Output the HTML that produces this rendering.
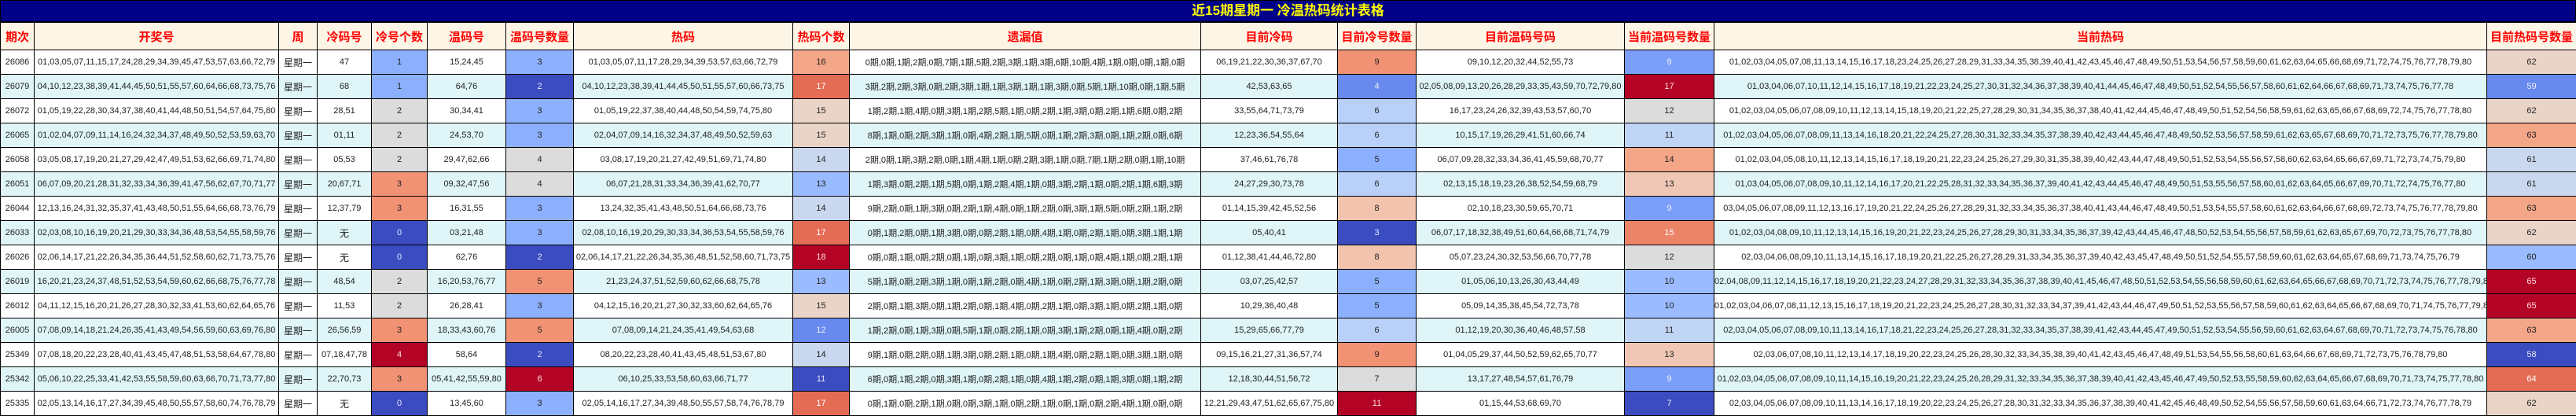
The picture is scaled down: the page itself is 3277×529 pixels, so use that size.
<!DOCTYPE html>
<html><head><meta charset="utf-8">
<style>
*{margin:0;padding:0;box-sizing:border-box}
body{width:3277px;height:529px;overflow:hidden;background:#fff;font-family:"Liberation Sans","Noto Sans CJK SC",sans-serif}
.title{height:28px;background:#000088;border:1px solid #000;color:#ffff00;font-weight:bold;font-size:17px;line-height:26px;text-align:center}
table{border-collapse:collapse;table-layout:fixed;width:3277px}
td,th{border:1px solid #000;text-align:center;white-space:nowrap;overflow:hidden;font-size:11px;color:#222}
th{height:35px;background:#fdf5e6;color:#ff0000;font-size:15px;font-weight:bold}
td{height:31px}
tr.e td{background:#dff5f8}
td.w{font-size:12px}
.db{background:#3b4cc0!important;color:#e8e8ff!important}
.mb{background:#6889ee!important;color:#eef!important}
.mb2{background:#7b9ff9!important;color:#eef!important}
.lb{background:#8db0fe!important}
.lb2{background:#9abbff!important}
.vb{background:#b9d0f9!important}
.vb2{background:#c0d4f5!important}
.pb{background:#cad8ef!important}
.g{background:#dcdcdc!important}
.pk{background:#ead4c8!important}
.pk2{background:#efc7b4!important}
.s1{background:#f2c4ae!important}
.s2{background:#f4a688!important}
.s3{background:#f29274!important}
.s4{background:#ec8468!important;color:#fff!important}
.r1{background:#e46c54!important;color:#fff!important}
.dr{background:#b40426!important;color:#fdd!important}
</style></head><body>
<div class="title">近15期星期一 冷温热码统计表格</div>
<table>
<colgroup><col style="width:43px"><col style="width:311px"><col style="width:49px"><col style="width:69px"><col style="width:71px"><col style="width:100px"><col style="width:86px"><col style="width:279px"><col style="width:72px"><col style="width:447px"><col style="width:174px"><col style="width:100px"><col style="width:265px"><col style="width:114px"><col style="width:983px"><col style="width:114px"></colgroup>
<tr><th>期次</th><th>开奖号</th><th>周</th><th>冷码号</th><th>冷号个数</th><th>温码号</th><th>温码号数量</th><th>热码</th><th>热码个数</th><th>遗漏值</th><th>目前冷码</th><th>目前冷号数量</th><th>目前温码号码</th><th>当前温码号数量</th><th>当前热码</th><th>目前热码号数量</th></tr>

<tr><td>26086</td><td>01,03,05,07,11,15,17,24,28,29,34,39,45,47,53,57,63,66,72,79</td><td class="w">星期一</td><td>47</td><td class="lb">1</td><td>15,24,45</td><td class="lb">3</td><td>01,03,05,07,11,17,28,29,34,39,53,57,63,66,72,79</td><td class="s2">16</td><td>0期,0期,1期,2期,0期,7期,1期,5期,2期,3期,1期,3期,6期,10期,4期,1期,0期,0期,1期,0期</td><td>06,19,21,22,30,36,37,67,70</td><td class="s3">9</td><td>09,10,12,20,32,44,52,55,73</td><td class="mb2">9</td><td>01,02,03,04,05,07,08,11,13,14,15,16,17,18,23,24,25,26,27,28,29,31,33,34,35,38,39,40,41,42,43,45,46,47,48,49,50,51,53,54,56,57,58,59,60,61,62,63,64,65,66,68,69,71,72,74,75,76,77,78,79,80</td><td class="pk">62</td></tr>

<tr class="e"><td>26079</td><td>04,10,12,23,38,39,41,44,45,50,51,55,57,60,64,66,68,73,75,76</td><td class="w">星期一</td><td>68</td><td class="lb">1</td><td>64,76</td><td class="db">2</td><td>04,10,12,23,38,39,41,44,45,50,51,55,57,60,66,73,75</td><td class="r1">17</td><td>3期,2期,2期,3期,0期,2期,3期,1期,1期,3期,1期,1期,3期,0期,5期,1期,10期,0期,1期,5期</td><td>42,53,63,65</td><td class="mb">4</td><td>02,05,08,09,13,20,26,28,29,33,35,43,59,70,72,79,80</td><td class="dr">17</td><td>01,03,04,06,07,10,11,12,14,15,16,17,18,19,21,22,23,24,25,27,30,31,32,34,36,37,38,39,40,41,44,45,46,47,48,49,50,51,52,54,55,56,57,58,60,61,62,64,66,67,68,69,71,73,74,75,76,77,78</td><td class="mb">59</td></tr>

<tr><td>26072</td><td>01,05,19,22,28,30,34,37,38,40,41,44,48,50,51,54,57,64,75,80</td><td class="w">星期一</td><td>28,51</td><td class="g">2</td><td>30,34,41</td><td class="lb">3</td><td>01,05,19,22,37,38,40,44,48,50,54,59,74,75,80</td><td class="pk">15</td><td>1期,2期,1期,4期,0期,3期,1期,2期,5期,1期,0期,2期,1期,3期,0期,2期,1期,6期,0期,2期</td><td>33,55,64,71,73,79</td><td class="vb">6</td><td>16,17,23,24,26,32,39,43,53,57,60,70</td><td class="g">12</td><td>01,02,03,04,05,06,07,08,09,10,11,12,13,14,15,18,19,20,21,22,25,27,28,29,30,31,34,35,36,37,38,40,41,42,44,45,46,47,48,49,50,51,52,54,56,58,59,61,62,63,65,66,67,68,69,72,74,75,76,77,78,80</td><td class="pk">62</td></tr>

<tr class="e"><td>26065</td><td>01,02,04,07,09,11,14,16,24,32,34,37,48,49,50,52,53,59,63,70</td><td class="w">星期一</td><td>01,11</td><td class="g">2</td><td>24,53,70</td><td class="lb">3</td><td>02,04,07,09,14,16,32,34,37,48,49,50,52,59,63</td><td class="pk">15</td><td>8期,1期,0期,2期,3期,1期,0期,4期,2期,1期,5期,0期,1期,2期,3期,0期,1期,2期,0期,6期</td><td>12,23,36,54,55,64</td><td class="vb">6</td><td>10,15,17,19,26,29,41,51,60,66,74</td><td class="vb2">11</td><td>01,02,03,04,05,06,07,08,09,11,13,14,16,18,20,21,22,24,25,27,28,30,31,32,33,34,35,37,38,39,40,42,43,44,45,46,47,48,49,50,52,53,56,57,58,59,61,62,63,65,67,68,69,70,71,72,73,75,76,77,78,79,80</td><td class="s2">63</td></tr>

<tr><td>26058</td><td>03,05,08,17,19,20,21,27,29,42,47,49,51,53,62,66,69,71,74,80</td><td class="w">星期一</td><td>05,53</td><td class="g">2</td><td>29,47,62,66</td><td class="g">4</td><td>03,08,17,19,20,21,27,42,49,51,69,71,74,80</td><td class="pb">14</td><td>2期,0期,1期,3期,2期,0期,1期,4期,1期,0期,2期,3期,1期,0期,7期,1期,2期,0期,1期,10期</td><td>37,46,61,76,78</td><td class="lb">5</td><td>06,07,09,28,32,33,34,36,41,45,59,68,70,77</td><td class="s2">14</td><td>01,02,03,04,05,08,10,11,12,13,14,15,16,17,18,19,20,21,22,23,24,25,26,27,29,30,31,35,38,39,40,42,43,44,47,48,49,50,51,52,53,54,55,56,57,58,60,62,63,64,65,66,67,69,71,72,73,74,75,79,80</td><td class="pb">61</td></tr>

<tr class="e"><td>26051</td><td>06,07,09,20,21,28,31,32,33,34,36,39,41,47,56,62,67,70,71,77</td><td class="w">星期一</td><td>20,67,71</td><td class="s3">3</td><td>09,32,47,56</td><td class="g">4</td><td>06,07,21,28,31,33,34,36,39,41,62,70,77</td><td class="lb2">13</td><td>1期,3期,0期,2期,1期,5期,0期,1期,2期,4期,1期,0期,3期,2期,1期,0期,2期,1期,6期,3期</td><td>24,27,29,30,73,78</td><td class="vb">6</td><td>02,13,15,18,19,23,26,38,52,54,59,68,79</td><td class="pk2">13</td><td>01,03,04,05,06,07,08,09,10,11,12,14,16,17,20,21,22,25,28,31,32,33,34,35,36,37,39,40,41,42,43,44,45,46,47,48,49,50,51,53,55,56,57,58,60,61,62,63,64,65,66,67,69,70,71,72,74,75,76,77,80</td><td class="pb">61</td></tr>

<tr><td>26044</td><td>12,13,16,24,31,32,35,37,41,43,48,50,51,55,64,66,68,73,76,79</td><td class="w">星期一</td><td>12,37,79</td><td class="s3">3</td><td>16,31,55</td><td class="lb">3</td><td>13,24,32,35,41,43,48,50,51,64,66,68,73,76</td><td class="pb">14</td><td>9期,2期,0期,1期,3期,0期,2期,1期,4期,0期,1期,2期,0期,3期,1期,5期,0期,2期,1期,2期</td><td>01,14,15,39,42,45,52,56</td><td class="s1">8</td><td>02,10,18,23,30,59,65,70,71</td><td class="mb2">9</td><td>03,04,05,06,07,08,09,11,12,13,16,17,19,20,21,22,24,25,26,27,28,29,31,32,33,34,35,36,37,38,40,41,43,44,46,47,48,49,50,51,53,54,55,57,58,60,61,62,63,64,66,67,68,69,72,73,74,75,76,77,78,79,80</td><td class="s2">63</td></tr>

<tr class="e"><td>26033</td><td>02,03,08,10,16,19,20,21,29,30,33,34,36,48,53,54,55,58,59,76</td><td class="w">星期一</td><td class="w">无</td><td class="db">0</td><td>03,21,48</td><td class="lb">3</td><td>02,08,10,16,19,20,29,30,33,34,36,53,54,55,58,59,76</td><td class="r1">17</td><td>0期,1期,2期,0期,1期,3期,0期,0期,2期,1期,0期,4期,1期,0期,2期,1期,0期,3期,1期,1期</td><td>05,40,41</td><td class="db">3</td><td>06,07,17,18,32,38,49,51,60,64,66,68,71,74,79</td><td class="s4">15</td><td>01,02,03,04,08,09,10,11,12,13,14,15,16,19,20,21,22,23,24,25,26,27,28,29,30,31,33,34,35,36,37,39,42,43,44,45,46,47,48,50,52,53,54,55,56,57,58,59,61,62,63,65,67,69,70,72,73,75,76,77,78,80</td><td class="pk">62</td></tr>

<tr><td>26026</td><td>02,06,14,17,21,22,26,34,35,36,44,51,52,58,60,62,71,73,75,76</td><td class="w">星期一</td><td class="w">无</td><td class="db">0</td><td>62,76</td><td class="db">2</td><td>02,06,14,17,21,22,26,34,35,36,48,51,52,58,60,71,73,75</td><td class="dr">18</td><td>0期,0期,1期,0期,2期,0期,1期,0期,3期,1期,0期,2期,0期,1期,0期,4期,1期,0期,2期,1期</td><td>01,12,38,41,44,46,72,80</td><td class="s1">8</td><td>05,07,23,24,30,32,53,56,66,70,77,78</td><td class="g">12</td><td>02,03,04,06,08,09,10,11,13,14,15,16,17,18,19,20,21,22,25,26,27,28,29,31,33,34,35,36,37,39,40,42,43,45,47,48,49,50,51,52,54,55,57,58,59,60,61,62,63,64,65,67,68,69,71,73,74,75,76,79</td><td class="lb2">60</td></tr>

<tr class="e"><td>26019</td><td>16,20,21,23,24,37,48,51,52,53,54,59,60,62,66,68,75,76,77,78</td><td class="w">星期一</td><td>48,54</td><td class="g">2</td><td>16,20,53,76,77</td><td class="s3">5</td><td>21,23,24,37,51,52,59,60,62,66,68,75,78</td><td class="lb2">13</td><td>5期,1期,0期,2期,3期,1期,0期,1期,2期,0期,4期,1期,0期,2期,1期,3期,0期,1期,2期,0期</td><td>03,07,25,42,57</td><td class="lb">5</td><td>01,05,06,10,13,26,30,43,44,49</td><td class="lb2">10</td><td>02,04,08,09,11,12,14,15,16,17,18,19,20,21,22,23,24,27,28,29,31,32,33,34,35,36,37,38,39,40,41,45,46,47,48,50,51,52,53,54,55,56,58,59,60,61,62,63,64,65,66,67,68,69,70,71,72,73,74,75,76,77,78,79,80</td><td class="dr">65</td></tr>

<tr><td>26012</td><td>04,11,12,15,16,20,21,26,27,28,30,32,33,41,53,60,62,64,65,76</td><td class="w">星期一</td><td>11,53</td><td class="g">2</td><td>26,28,41</td><td class="lb">3</td><td>04,12,15,16,20,21,27,30,32,33,60,62,64,65,76</td><td class="pk">15</td><td>2期,0期,1期,3期,0期,1期,2期,0期,1期,4期,0期,2期,1期,0期,3期,1期,0期,2期,1期,0期</td><td>10,29,36,40,48</td><td class="lb">5</td><td>05,09,14,35,38,45,54,72,73,78</td><td class="lb2">10</td><td>01,02,03,04,06,07,08,11,12,13,15,16,17,18,19,20,21,22,23,24,25,26,27,28,30,31,32,33,34,37,39,41,42,43,44,46,47,49,50,51,52,53,55,56,57,58,59,60,61,62,63,64,65,66,67,68,69,70,71,74,75,76,77,79,80</td><td class="dr">65</td></tr>

<tr class="e"><td>26005</td><td>07,08,09,14,18,21,24,26,35,41,43,49,54,56,59,60,63,69,76,80</td><td class="w">星期一</td><td>26,56,59</td><td class="s3">3</td><td>18,33,43,60,76</td><td class="s3">5</td><td>07,08,09,14,21,24,35,41,49,54,63,68</td><td class="mb">12</td><td>1期,2期,0期,1期,3期,0期,5期,1期,0期,2期,1期,0期,3期,1期,2期,0期,1期,4期,0期,2期</td><td>15,29,65,66,77,79</td><td class="vb">6</td><td>01,12,19,20,30,36,40,46,48,57,58</td><td class="vb2">11</td><td>02,03,04,05,06,07,08,09,10,11,13,14,16,17,18,21,22,23,24,25,26,27,28,31,32,33,34,35,37,38,39,41,42,43,44,45,47,49,50,51,52,53,54,55,56,59,60,61,62,63,64,67,68,69,70,71,72,73,74,75,76,78,80</td><td class="s2">63</td></tr>

<tr><td>25349</td><td>07,08,18,20,22,23,28,40,41,43,45,47,48,51,53,58,64,67,78,80</td><td class="w">星期一</td><td>07,18,47,78</td><td class="dr">4</td><td>58,64</td><td class="db">2</td><td>08,20,22,23,28,40,41,43,45,48,51,53,67,80</td><td class="pb">14</td><td>9期,1期,0期,2期,0期,1期,3期,0期,2期,1期,0期,1期,4期,0期,2期,1期,0期,3期,1期,0期</td><td>09,15,16,21,27,31,36,57,74</td><td class="s3">9</td><td>01,04,05,29,37,44,50,52,59,62,65,70,77</td><td class="pk2">13</td><td>02,03,06,07,08,10,11,12,13,14,17,18,19,20,22,23,24,25,26,28,30,32,33,34,35,38,39,40,41,42,43,45,46,47,48,49,51,53,54,55,56,58,60,61,63,64,66,67,68,69,71,72,73,75,76,78,79,80</td><td class="db">58</td></tr>

<tr class="e"><td>25342</td><td>05,06,10,22,25,33,41,42,53,55,58,59,60,63,66,70,71,73,77,80</td><td class="w">星期一</td><td>22,70,73</td><td class="s3">3</td><td>05,41,42,55,59,80</td><td class="dr">6</td><td>06,10,25,33,53,58,60,63,66,71,77</td><td class="db">11</td><td>6期,0期,1期,2期,0期,3期,1期,0期,2期,1期,0期,4期,1期,2期,0期,1期,3期,0期,1期,2期</td><td>12,18,30,44,51,56,72</td><td class="g">7</td><td>13,17,27,48,54,57,61,76,79</td><td class="mb2">9</td><td>01,02,03,04,05,06,07,08,09,10,11,14,15,16,19,20,21,22,23,24,25,26,28,29,31,32,33,34,35,36,37,38,39,40,41,42,43,45,46,47,49,50,52,53,55,58,59,60,62,63,64,65,66,67,68,69,70,71,73,74,75,77,78,80</td><td class="r1">64</td></tr>

<tr><td>25335</td><td>02,05,13,14,16,17,27,34,39,45,48,50,55,57,58,60,74,76,78,79</td><td class="w">星期一</td><td class="w">无</td><td class="db">0</td><td>13,45,60</td><td class="lb">3</td><td>02,05,14,16,17,27,34,39,48,50,55,57,58,74,76,78,79</td><td class="r1">17</td><td>0期,1期,0期,2期,1期,0期,0期,3期,1期,0期,2期,1期,0期,1期,0期,2期,4期,1期,0期,0期</td><td>12,21,29,43,47,51,62,65,67,75,80</td><td class="dr">11</td><td>01,15,44,53,68,69,70</td><td class="db">7</td><td>02,03,04,05,06,07,08,09,10,11,13,14,16,17,18,19,20,22,23,24,25,26,27,28,30,31,32,33,34,35,36,37,38,39,40,41,42,45,46,48,49,50,52,54,55,56,57,58,59,60,61,63,64,66,71,72,73,74,76,77,78,79</td><td class="pk">62</td></tr>
</table>
</body></html>
